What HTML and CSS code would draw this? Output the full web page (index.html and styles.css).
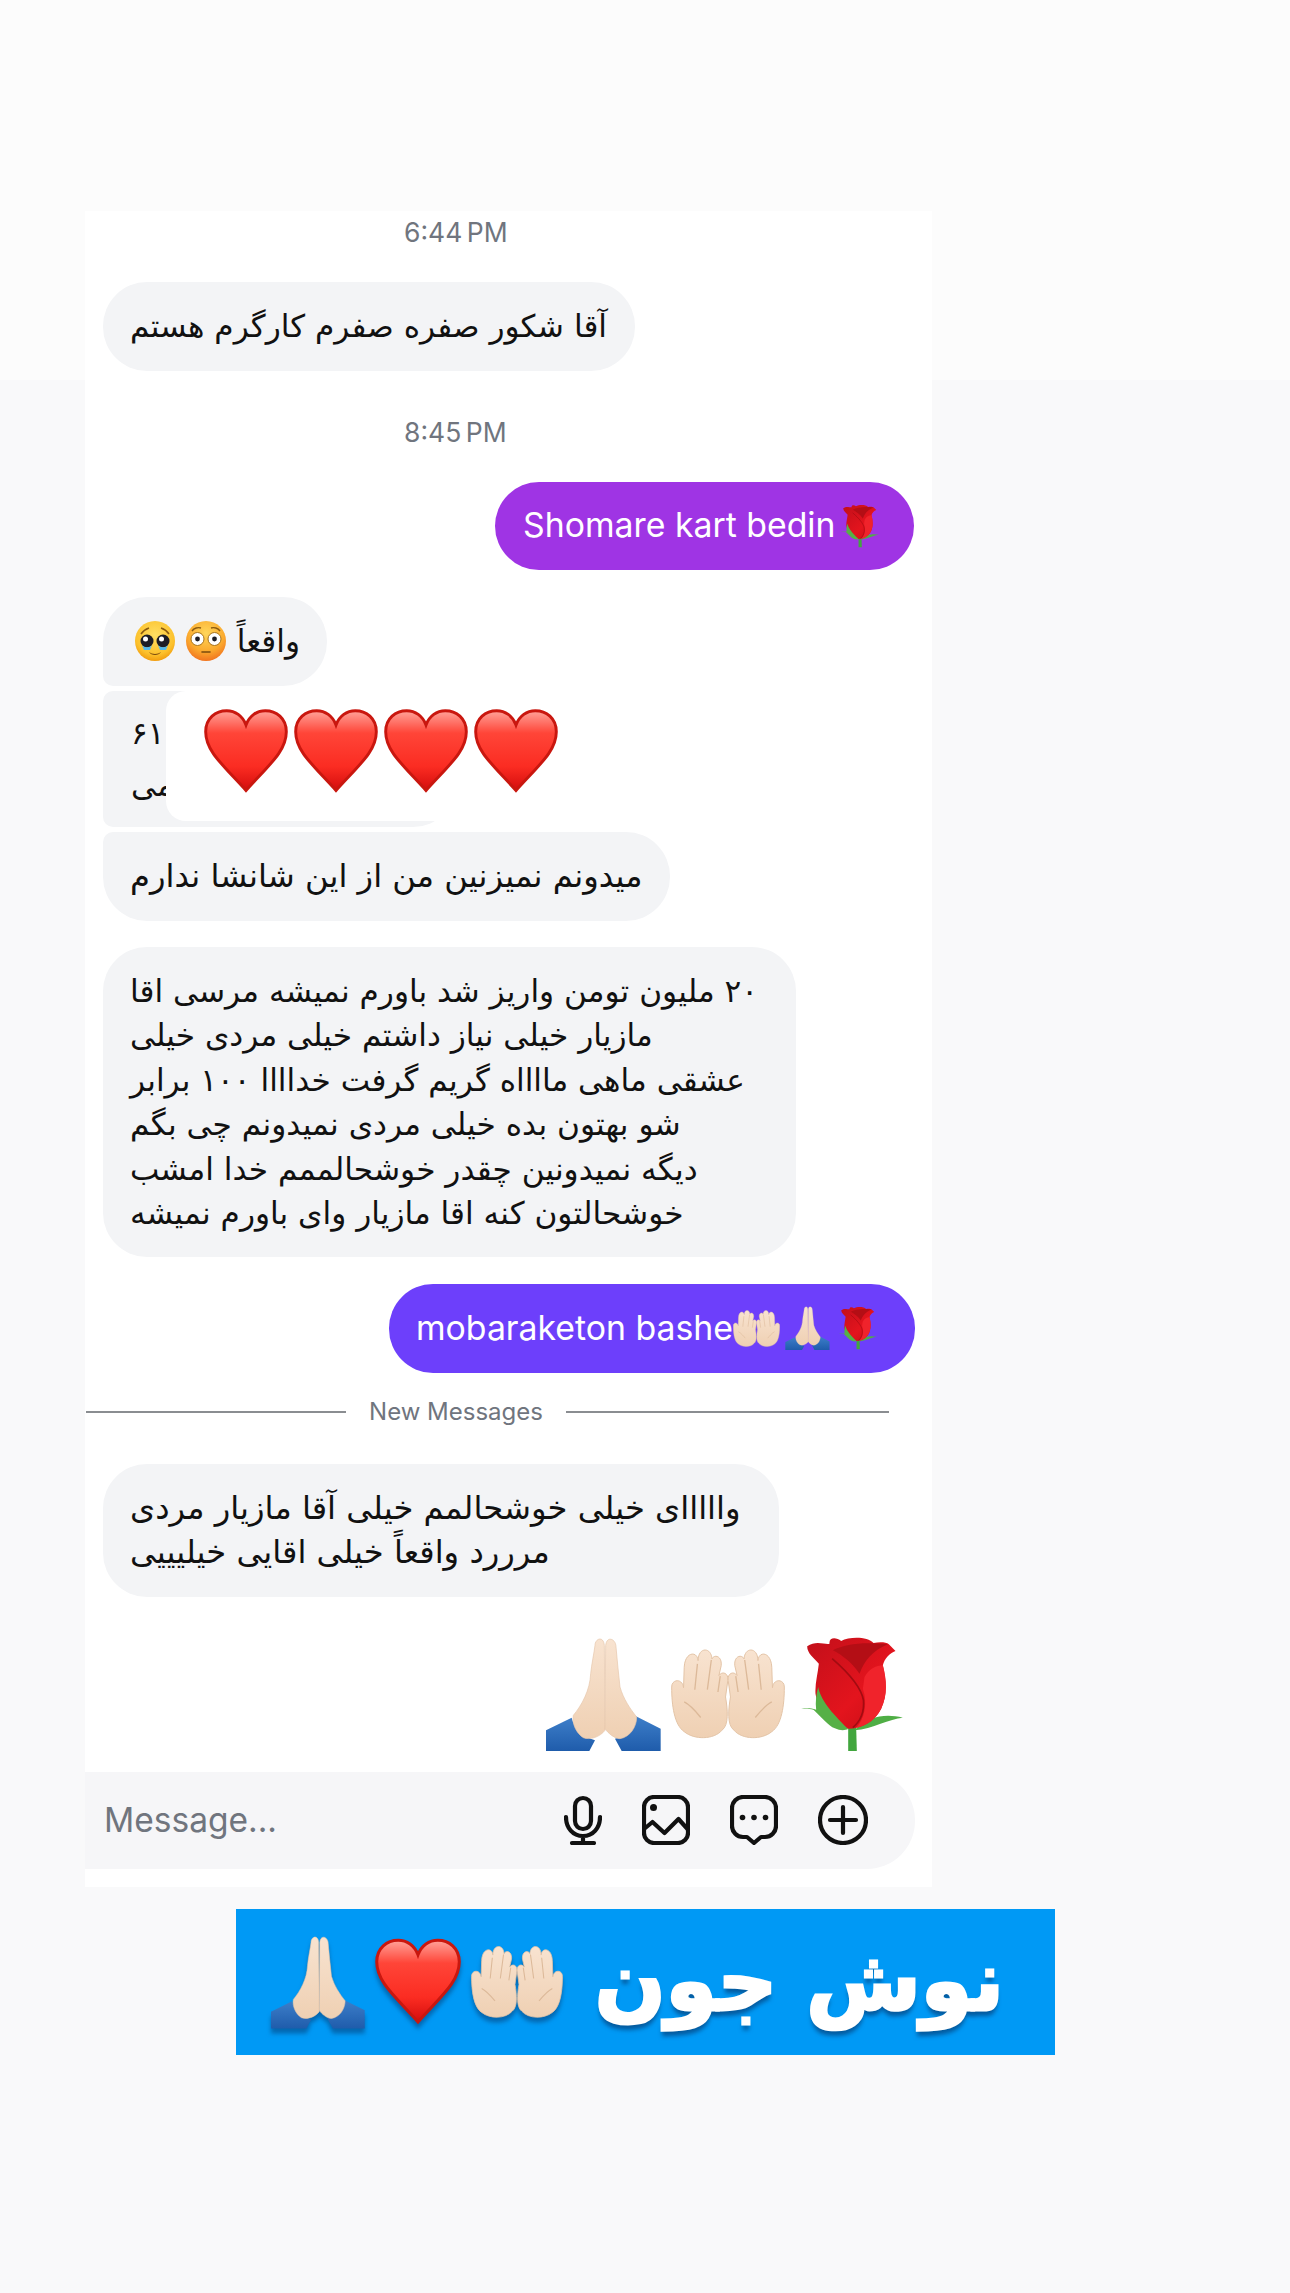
FILE: index.html
```html
<!DOCTYPE html>
<html lang="fa">
<head>
  <meta charset="UTF-8">
  <meta name="viewport" content="width=device-width, initial-scale=1.0">
  <title>Messages</title>
  <link rel="stylesheet" href="styles.css">
</head>
<body>
  <!-- emoji drawings, reused below -->
  <svg class="defs" width="0" height="0" aria-hidden="true">
    <defs>
      <linearGradient id="heartFill" x1="0" y1="0" x2="0" y2="1">
        <stop offset="0" stop-color="#ffa39a"/>
        <stop offset="0.28" stop-color="#ff4538"/>
        <stop offset="0.7" stop-color="#fb2c22"/>
        <stop offset="1" stop-color="#d40d0d"/>
      </linearGradient>
      <linearGradient id="roseFill" x1="0" y1="0" x2="1" y2="1">
        <stop offset="0" stop-color="#c20f1a"/>
        <stop offset="0.6" stop-color="#e3141d"/>
        <stop offset="1" stop-color="#c40d15"/>
      </linearGradient>
      <linearGradient id="sleeveFill" x1="0" y1="0" x2="0" y2="1">
        <stop offset="0" stop-color="#3d7ec9"/>
        <stop offset="1" stop-color="#1f5cab"/>
      </linearGradient>
      <linearGradient id="skinFill" x1="0" y1="0" x2="0" y2="1">
        <stop offset="0" stop-color="#f8e3d0"/>
        <stop offset="1" stop-color="#efd0b3"/>
      </linearGradient>
      <radialGradient id="faceFill" cx="0.5" cy="0.35" r="0.7">
        <stop offset="0" stop-color="#ffdf63"/>
        <stop offset="0.7" stop-color="#fcc12c"/>
        <stop offset="1" stop-color="#ee9206"/>
      </radialGradient>
      <radialGradient id="blushFill" cx="0.5" cy="0.3" r="0.75">
        <stop offset="0" stop-color="#ffd65a"/>
        <stop offset="0.6" stop-color="#fbab2f"/>
        <stop offset="1" stop-color="#ef6a1c"/>
      </radialGradient>
    </defs>
    <symbol id="heart" viewBox="0 0 100 100">
      <path d="M50 97C22 66 2 50 2 27 2 11 14 2 27 2c10 0 19 6 23 17C54 8 63 2 73 2c13 0 25 9 25 25 0 23-20 39-48 70z" fill="url(#heartFill)" stroke="#c9170f" stroke-width="3.500"/>
    </symbol>
    <symbol id="rose" viewBox="785 20 305 342">
      <path d="M926 290h24l2 72h-26z" fill="#42a63e"/>
      <path d="M1090 262c-50-12-100-7-145 38 55-5 105-35 145-38z" fill="#4fae45"/>
      <path d="M803 48c27-20 57-3 67-8-2-20 20-20 35-8 25-14 80-14 97 6 18-3 38-3 46 4l20 20c-18 6-33 23-38 43 10 45 15 85-5 130-20 40-60 60-100 60-45-10-90-55-97-105-2-30 7-60 10-90-13-15-35-30-35-52z" fill="url(#roseFill)"/>
      <path d="M880 60c40-20 90-25 165-18-45 18-70 48-85 88-20-30-50-55-80-70z" fill="#b40e15"/>
      <path d="M975 140c15-25 35-35 55-35 12 45 15 90-5 130-15 30-40 50-75 57 25-27 35-72 20-117z" fill="#f0232b"/>
      <path d="M878 85c52 45 87 85 94 125 3 35-7 60-32 82" fill="none" stroke="#a30b11" stroke-width="5"/>
      <path d="M836 170c8 38 35 72 90 126-10 5-25 5-40-2-20-8-36-30-64-56-12-4-25-3-37-3 15-2 30-2 45 3-3-22 0-45 6-68z" fill="#56b046"/>
    </symbol>
    <symbol id="pray" viewBox="18 20 345 342">
      <path d="M18 300l77-38c5 28 35 58 70 68l-17 32H18z" fill="url(#sleeveFill)"/>
      <path d="M362 295l-74-37c-3 32-33 62-63 67l20 37h117z" fill="url(#sleeveFill)"/>
      <path d="M165 45c0-20 25-30 28 0l2 255c-15 20-45 30-65 22-20-12-35-42-30-67 25-30 50-75 52-125 3-30 10-60 13-85z" fill="url(#skinFill)" stroke="#e6c6aa" stroke-width="2"/>
      <path d="M197 45c3-30 31-20 31 5 4 40 7 80 12 120 10 35 30 65 50 90 0 30-20 60-50 65-15 0-35-15-45-30z" fill="url(#skinFill)" stroke="#e6c6aa" stroke-width="2"/>
    </symbol>
    <symbol id="hands" viewBox="390 55 345 272">
      <g fill="url(#skinFill)" stroke="#e3c3a6" stroke-width="3">
        <path d="M392 170c0-25 33-27 36 2l2-62c2-48 40-50 42-20 0-42 40-42 42-5 6-15 31-10 28 20l-7 30c10-15 30-7 27 15l-7 50c7 40 10 85-10 100-25 30-85 30-115 5-30-20-38-80-38-135z"/>
        <path d="M462 178l8-78M500 178l12-90M532 185l7-48M430 215c20 10 40 35 50 47" fill="none" stroke="#dcb999" stroke-width="4"/>
      </g>
      <g fill="url(#skinFill)" stroke="#e3c3a6" stroke-width="3" transform="matrix(-1 0 0 1 1125 0)">
        <path d="M392 170c0-25 33-27 36 2l2-62c2-48 40-50 42-20 0-42 40-42 42-5 6-15 31-10 28 20l-7 30c10-15 30-7 27 15l-7 50c7 40 10 85-10 100-25 30-85 30-115 5-30-20-38-80-38-135z"/>
        <path d="M462 178l8-78M500 178l12-90M532 185l7-48M430 215c20 10 40 35 50 47" fill="none" stroke="#dcb999" stroke-width="4"/>
      </g>
    </symbol>
    <symbol id="pleading" viewBox="0 0 40 40">
      <circle cx="20" cy="20" r="20" fill="url(#faceFill)"/>
      <path d="M6 13c2-3 5-5 8-6M34 13c-2-3-5-5-8-6" fill="none" stroke="#8a5a10" stroke-width="1.500"/>
      <circle cx="12" cy="20" r="6.500" fill="#1d1d25"/>
      <circle cx="28" cy="20" r="6.500" fill="#1d1d25"/>
      <circle cx="10.500" cy="18" r="2.500" fill="#fff"/>
      <circle cx="26.500" cy="18" r="2.500" fill="#fff"/>
      <path d="M7 24c2 3 8 3 10 0l-2 5H9z" fill="#55b8ea"/>
      <path d="M23 24c2 3 8 3 10 0l-2 5h-6z" fill="#55b8ea"/>
      <path d="M14 31c3 2.500 9 2.500 12 0-2 4-10 4-12 0z" fill="#7a4a0c"/>
    </symbol>
    <symbol id="flushed" viewBox="0 0 40 40">
      <circle cx="20" cy="20" r="20" fill="url(#blushFill)"/>
      <path d="M6 10c2-3 6-4 9-3M34 10c-2-3-6-4-9-3" fill="none" stroke="#8a5a10" stroke-width="1.400"/>
      <circle cx="11.500" cy="18" r="6.500" fill="#fff" stroke="#a8741c" stroke-width="1"/>
      <circle cx="28.500" cy="18" r="6.500" fill="#fff" stroke="#a8741c" stroke-width="1"/>
      <circle cx="11.500" cy="18" r="2.400" fill="#1d1d25"/>
      <circle cx="28.500" cy="18" r="2.400" fill="#1d1d25"/>
      <path d="M16 31h8" stroke="#7a4a0c" stroke-width="1.600" stroke-linecap="round"/>
    </symbol>
  </svg>

  <main class="chat">
    <div class="time">6:44 PM</div>
    <div class="bubble bubble-them w1" dir="rtl">آقا شکور صفره صفرم کارگرم هستم</div>

    <div class="time time-later">8:45 PM</div>
    <div class="bubble bubble-me bubble-purple">
      <span>Shomare kart bedin</span>
      <svg class="emoji-rose"><use href="#rose"/></svg>
    </div>

    <div class="bubble bubble-them bubble-top w3" dir="rtl">
      <span>واقعاً</span>
      <svg class="emoji-face"><use href="#flushed"/></svg>
      <svg class="emoji-face"><use href="#pleading"/></svg>
    </div>

    <div class="bubble bubble-them bubble-mid bubble-card w4">
      <div class="digits">۶۱۰</div>
      <div dir="rtl">می</div>
      <div class="reaction">
        <svg class="emoji-heart"><use href="#heart"/></svg>
        <svg class="emoji-heart"><use href="#heart"/></svg>
        <svg class="emoji-heart"><use href="#heart"/></svg>
        <svg class="emoji-heart"><use href="#heart"/></svg>
      </div>
    </div>

    <div class="bubble bubble-them bubble-last w5" dir="rtl">میدونم نمیزنین من از این شانشا ندارم</div>

    <div class="bubble bubble-them bubble-long w6" dir="rtl">
      ۲۰ ملیون تومن واریز شد باورم نمیشه مرسی اقا<br>
      مازیار خیلی نیاز داشتم خیلی مردی خیلی<br>
      عشقی ماهی مااااه گریم گرفت خداااا ۱۰۰ برابر<br>
      شو بهتون بده خیلی مردی نمیدونم چی بگم<br>
      دیگه نمیدونین چقدر خوشحالممم خدا امشب<br>
      خوشحالتون کنه اقا مازیار وای باورم نمیشه
    </div>

    <div class="bubble bubble-me bubble-violet">
      <span>mobaraketon bashe</span>
      <svg class="emoji-hands"><use href="#hands"/></svg>
      <svg class="emoji-pray"><use href="#pray"/></svg>
      <svg class="emoji-rose"><use href="#rose"/></svg>
    </div>

    <div class="divider">
      <span class="divider-left"></span>
      <span class="divider-text">New Messages</span>
      <span class="divider-right"></span>
    </div>

    <div class="bubble bubble-them bubble-new w8" dir="rtl">
      وااااای خیلی خوشحالمم خیلی آقا مازیار مردی<br>
      مرررد واقعاً خیلی اقایی خیلیییی
    </div>

    <div class="big-emoji">
      <svg class="big-pray"><use href="#pray"/></svg>
      <svg class="big-hands"><use href="#hands"/></svg>
      <svg class="big-rose"><use href="#rose"/></svg>
    </div>

    <div class="composer">
      <span class="placeholder">Message...</span>
      <div class="composer-icons">
        <svg class="icon" width="38" height="50" viewBox="0 0 38 50">
          <rect x="11" y="3" width="16" height="31" rx="8"/>
          <path d="M2 22c0 11 7 19 17 19s17-8 17-19M19 41v7M8 48h22"/>
        </svg>
        <svg class="icon" width="48" height="50" viewBox="0 0 48 50">
          <rect x="2" y="2" width="44" height="46" rx="10"/>
          <path d="M2 34l8.500-7 12 11 14-14 9 10"/>
          <circle class="icon-dot" cx="11.500" cy="12.500" r="3.500"/>
        </svg>
        <svg class="icon" width="48" height="50" viewBox="0 0 48 50">
          <path d="M13 2h22a11 11 0 0 1 11 11v18a11 11 0 0 1-11 11h-4l-7 6-7-6h-4A11 11 0 0 1 2 31V13A11 11 0 0 1 13 2z"/>
          <circle class="icon-dot" cx="12.500" cy="22.500" r="2.800"/>
          <circle class="icon-dot" cx="24" cy="22.500" r="2.800"/>
          <circle class="icon-dot" cx="35.500" cy="22.500" r="2.800"/>
        </svg>
        <svg class="icon" width="50" height="50" viewBox="0 0 50 50">
          <circle cx="25" cy="25" r="23"/>
          <path d="M12 25h26M25 12v26"/>
        </svg>
      </div>
    </div>
  </main>

  <div class="banner">
    <div class="banner-emoji">
      <svg class="banner-pray"><use href="#pray"/></svg>
      <svg class="banner-heart"><use href="#heart"/></svg>
      <svg class="banner-hands"><use href="#hands"/></svg>
    </div>
    <div class="banner-text" dir="rtl">نوش جون</div>
  </div>
</body>
</html>
```

FILE: styles.css
```css
body {
    margin: 0;
    min-height: 2293px;
    padding-top: 211px;
    box-sizing: border-box;
    font-family: "Inter", "DejaVu Sans", sans-serif;
    background: linear-gradient(#fcfcfc 380px, #f9f9fa 380px);
}

.defs {
    position: absolute;
}

.chat {
    margin-left: 85px;
    width: 847px;
    padding-bottom: 18px;
    background-color: #fff;
    display: flex;
    flex-direction: column;
}

.time {
    align-self: flex-start;
    height: 42px;
    line-height: 42px;
    margin: 0 0 29px 319px;
    font-size: 26.5px;
    color: #70757e;
    word-spacing: -3px;
}

.time-later {
    margin-top: 40px;
}

.bubble {
    box-sizing: border-box;
    border-radius: 44px;
    font-family: "DejaVu Sans", sans-serif;
    font-size: 31.2px;
    line-height: 44.5px;
    color: #111;
    white-space: nowrap;
}

.bubble-them {
    margin-left: 18px;
    padding: 22px 27px;
    background-color: #f3f4f6;
    text-align: left;
}

.bubble-me {
    align-self: flex-start;
    display: flex;
    align-items: center;
    font-family: "Inter", sans-serif;
    font-size: 33.8px;
    color: #fff;
}

.bubble-purple {
    margin: 0 0 27px 410px;
    padding: 0 35px 0 28px;
    width: 419px;
    height: 88px;
    background-color: #9f34e4;
}

.bubble-purple .emoji-rose {
    margin-left: 6px;
}

.bubble-violet {
    margin: 27px 0 0 304px;
    padding: 0 35px 0 27px;
    width: 526px;
    height: 89px;
    background-color: #6d3ffb;
}

.w1 { width: 532px; }
.w3 { width: 224px; }
.w4 { width: 354px; }
.w5 { width: 567px; font-size: 32.2px; }
.w6 { width: 693px; }
.w8 { width: 676px; font-size: 32.2px; }

.bubble-top {
    display: flex;
    align-items: center;
    gap: 11px;
    height: 89px;
    padding: 0 27px;
    border-bottom-left-radius: 10px;
    margin-bottom: 5px;
}

.bubble-mid {
    border-radius: 10px 44px 44px 10px;
    margin-bottom: 5px;
}

.bubble-card {
    position: relative;
    height: 136px;
    padding: 16px 28px;
    line-height: 52px;
}

.digits {
    letter-spacing: -3px;
}

.reaction {
    position: absolute;
    left: 63px;
    top: 0;
    width: 310px;
    height: 130px;
    padding: 18px 0 0 38px;
    box-sizing: border-box;
    background-color: #fff;
    border-radius: 20px;
    display: flex;
    gap: 6px;
}

.emoji-heart {
    width: 84px;
    height: 84px;
    flex: none;
}

.bubble-last {
    height: 89px;
    border-top-left-radius: 10px;
}

.bubble-long {
    margin-top: 26px;
    height: 310px;
}

.emoji-face {
    width: 40px;
    height: 40px;
}

.emoji-rose {
    width: 38px;
    height: 44px;
    flex: none;
}

.emoji-hands {
    width: 47px;
    height: 37px;
    flex: none;
}

.emoji-pray {
    width: 47px;
    height: 44px;
    margin-left: 4px;
    margin-right: 8px;
    flex: none;
}

.divider {
    display: flex;
    align-items: center;
    height: 44px;
    margin-top: 17px;
}

.divider-left,
.divider-right {
    height: 2px;
    background-color: #8a8d91;
}

.divider-left {
    width: 260px;
    margin-left: 1px;
}

.divider-right {
    width: 323px;
}

.divider-text {
    width: 220px;
    text-align: center;
    font-size: 24px;
    color: #70757e;
}

.bubble-new {
    margin-top: 30px;
    height: 133px;
}

.big-emoji {
    display: flex;
    align-items: center;
    height: 114px;
    margin: 40px 0 21px 461px;
}

.big-pray {
    width: 115px;
    height: 114px;
}

.big-hands {
    width: 114px;
    height: 90px;
    margin-left: 10px;
}

.big-rose {
    width: 102px;
    height: 114px;
    margin-left: 16px;
}

.composer {
    display: flex;
    align-items: center;
    height: 97px;
    width: 830px;
    box-sizing: border-box;
    padding: 0 47px 0 19px;
    background-color: #f6f6f8;
    border-radius: 0 48px 48px 0;
}

.placeholder {
    font-size: 33.5px;
    color: #70757e;
}

.composer-icons {
    margin-left: auto;
    display: flex;
    align-items: center;
    gap: 40px;
}

.icon {
    fill: none;
    stroke: #111;
    stroke-width: 4.2;
    stroke-linecap: round;
    stroke-linejoin: round;
}

.icon-dot {
    fill: #111;
    stroke: none;
}

.banner {
    margin: 22px 0 0 236px;
    width: 819px;
    height: 146px;
    box-sizing: border-box;
    padding: 0 51px 0 35px;
    background-color: #0099f5;
    display: flex;
    align-items: center;
    justify-content: space-between;
}

.banner-emoji {
    display: flex;
    align-items: center;
    gap: 10px;
    filter: drop-shadow(0 5px 2px rgba(5, 70, 130, 0.6));
}

.banner-pray {
    width: 94px;
    height: 94px;
}

.banner-heart {
    width: 86px;
    height: 87px;
}

.banner-hands {
    width: 92px;
    height: 74px;
}

.banner-text {
    font-family: "DejaVu Sans", sans-serif;
    font-weight: 700;
    font-size: 83px;
    line-height: 146px;
    white-space: nowrap;
    color: #fff;
    -webkit-text-stroke: 3px #fff;
    text-shadow: 0 6px 4px rgba(5, 70, 130, 0.75);
}
```
